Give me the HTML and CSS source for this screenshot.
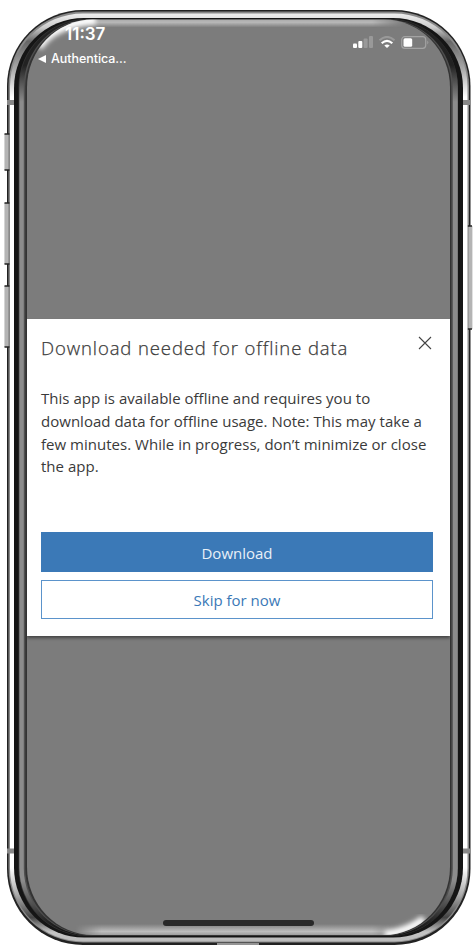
FILE: index.html
```html
<!DOCTYPE html>
<html lang="en">
<head>
<meta charset="utf-8">
<title>Download needed for offline data</title>
<link rel="stylesheet" href="styles.css">
</head>
<body>
<div class="phone">
  <svg class="frame" viewBox="0 0 475 949" aria-hidden="true">
    <defs>
      <linearGradient id="side" x1="0" x2="0" y1="0" y2="1">
        <stop offset="0" stop-color="#eee"/><stop offset=".015" stop-color="#ccc"/><stop offset=".03" stop-color="#666"/><stop offset=".06" stop-color="#aaa"/><stop offset=".09" stop-color="#fff"/>
        <stop offset=".92" stop-color="#fff"/><stop offset=".95" stop-color="#aaa"/><stop offset=".974" stop-color="#444"/><stop offset=".99" stop-color="#c4c4c4"/><stop offset="1" stop-color="#bbb"/>
      </linearGradient>
      <linearGradient id="inner" x1="0" x2="0" y1="0" y2="1">
        <stop offset="0" stop-color="#222"/><stop offset=".05" stop-color="#222"/><stop offset=".09" stop-color="#8c8c8c"/>
        <stop offset=".94" stop-color="#8c8c8c"/><stop offset=".985" stop-color="#222"/><stop offset="1" stop-color="#111"/>
      </linearGradient>
      <linearGradient id="topglow" x1="0" x2="0" y1="0" y2="1">
        <stop offset="0" stop-color="#aaa"/><stop offset=".35" stop-color="#b8b8b8"/><stop offset="1" stop-color="#7c7c7c"/>
      </linearGradient>
      <linearGradient id="botglow" x1="0" x2="0" y1="0" y2="1">
        <stop offset="0" stop-color="#7c7c7c"/><stop offset=".65" stop-color="#bdbdbd"/><stop offset="1" stop-color="#999"/>
      </linearGradient>
      <linearGradient id="fade" x1="0" x2="1" y1="0" y2="0">
        <stop offset="0" stop-color="#000"/><stop offset=".08" stop-color="#fff"/><stop offset=".9" stop-color="#fff"/><stop offset="1" stop-color="#000"/>
      </linearGradient>
      <mask id="ends"><rect x="75" y="0" width="330" height="949" fill="url(#fade)"/></mask>
      <filter id="soft" x="-30%" y="-30%" width="160%" height="160%"><feGaussianBlur stdDeviation="2.6"/></filter>
      <clipPath id="glass"><rect x="27" y="19.5" width="423" height="915.5" rx="66" ry="68"/></clipPath>
    </defs>
    <g fill="#b4b4b4">
      <rect x="4.500" y="134" width="5" height="36"/>
      <rect x="4.500" y="203" width="5" height="61"/>
      <rect x="4.500" y="286" width="5" height="61"/>
      <rect x="467" y="226" width="5" height="103"/>
    </g>
    <rect x="7" y="10" width="463.500" height="935" rx="76" fill="#222"/>
    <rect x="8.500" y="11.500" width="460.500" height="931" rx="74.500" fill="#888"/>
    <g>
      <path d="M6.800 134v36M6.800 203v61M6.800 286v61M470.500 226v103" stroke="#b4b4b4" stroke-width="3.800"/>
      <path d="M4.500 134h5M4.500 170h5M4.500 203h5M4.500 264h5M4.500 286h5M4.500 347h5M467.500 226h4.500M467.500 329h4.500" stroke="#222" stroke-width="1.700"/>
    </g>
    <rect x="10" y="13.500" width="457.500" height="928" rx="73" fill="url(#side)"/>
    <rect x="14" y="18" width="449" height="919.500" rx="70" fill="#151515"/>
    <rect x="18.500" y="19" width="439.500" height="917" rx="68" fill="#333"/>
    <rect x="19.300" y="19.500" width="438.500" height="916" rx="67.500" fill="url(#inner)"/>
    <rect x="23.800" y="19.500" width="429" height="916" rx="67" fill="#505050"/>
    <rect x="25.300" y="19.500" width="426" height="916" rx="67" fill="#333"/>
    <g fill="none" stroke="#888" stroke-width="5">
      <path d="M7 102.500h7M463 102.500h7M7 851h7M463 851h7"/>
    </g>
    <g clip-path="url(#glass)">
      <rect x="27" y="19" width="423" height="917" fill="#7c7c7c"/>
      <g mask="url(#ends)">
        <rect x="70" y="19.500" width="335" height="8" fill="url(#topglow)"/>
        <rect x="70" y="924" width="335" height="11.500" fill="url(#botglow)"/>
      </g>
      <path d="M38 47Q54 23 96 20" fill="none" stroke="#fff" stroke-width="9" filter="url(#soft)"/>
      <path d="M385 935Q409 931 424 919" fill="none" stroke="#fff" stroke-width="8" filter="url(#soft)"/>
    </g>
    <path d="M217 944h42" stroke="#bbb" stroke-width="1.500"/>
  </svg>
  <main class="screen">
    <header class="status">
      <div class="left">
        <div class="time">11:37</div>
        <div class="back"><svg width="8" height="8" viewBox="0 0 8 8"><path d="M8 0v8L0 4z" fill="#fff"/></svg><span>Authentica...</span></div>
      </div>
      <svg class="signals" width="76" height="14" viewBox="0 0 76 14">
        <g fill="#fff"><rect y="7.500" width="4" height="4.500" rx="1"/><rect x="5.300" y="5" width="4" height="7" rx="1"/></g>
        <g fill="#999"><rect x="10.600" y="2.500" width="4" height="9.500" rx="1"/><rect x="16" width="4" height="12" rx="1"/></g>
        <g fill="none" stroke-width="2"><path d="M26.500 4.300Q34-2.500 41.500 4.300" stroke="#999"/><path d="M28.700 7.300Q34 2.500 39.300 7.300" stroke="#fff" stroke-width="2.200"/></g>
        <path d="M31.300 9.500Q34 7.300 36.700 9.500L34 12z" fill="#fff"/>
        <rect x="48.700" y=".7" width="24" height="11.600" rx="3" fill="none" stroke="#a3a3a3" stroke-width="1.200"/>
        <rect x="50.500" y="2.300" width="8.700" height="8.400" rx="1.500" fill="#fff"/><path d="M74.300 4.500q2 2 0 4z" fill="#a3a3a3"/>
      </svg>
    </header>
    <section class="dialog">
      <div class="head">
        <h1>Download needed for offline data</h1>
        <svg class="close" width="14" height="14" viewBox="0 0 14 14"><path d="M1 1l12 12M13 1L1 13" stroke="#444" stroke-width="1.100"/></svg>
      </div>
      <p>This app is available offline and requires you to<br>download data for offline usage. Note: This may take a<br>few minutes. While in progress, don’t minimize or close<br>the app.</p>
      <button class="primary">Download</button>
      <button class="secondary">Skip for now</button>
    </section>
    <div class="home"></div>
  </main>
</div>
</body>
</html>
```
FILE: styles.css
```css
* { box-sizing: border-box; }
body { margin: 0; background: #fff; font-family: "Open Sans", "Noto Sans", sans-serif; }
.phone { position: relative; width: 475px; height: 949px; padding: 20px 25px 0 27px; overflow: hidden; }
.frame { position: absolute; inset: 0; width: 475px; height: 949px; }
.screen { position: relative; height: 915px; display: flex; flex-direction: column; }
.status { height: 298.5px; flex: none; display: flex; justify-content: space-between; padding: 4px 21px 0 11px; color: #fff; font-family: Inter, sans-serif; }
.time { font-size: 17px; font-weight: 600; line-height: 20px; padding-left: 27px; letter-spacing: 0; }
.back { display: flex; align-items: center; gap: 5px; font-size: 12.5px; line-height: 16px; margin-top: 6px; letter-spacing: -.05px; font-weight: 500; padding-top: 1px; }
.signals { margin-top: 12px; }
.dialog { height: 317.5px; flex: none; background: #fff; padding: 15px 17px 17px 14px; display: flex; flex-direction: column; box-shadow: 0 2px 3px #444; clip-path: inset(0 0 -8px 0); color: #3a3a3a; }
.head { display: flex; justify-content: space-between; }
h1 { margin: 0; font-size: 18.5px; font-weight: 300; line-height: 28px; letter-spacing: .9px; white-space: nowrap; -webkit-text-stroke: .25px #3a3a3a; }
.close { margin: 2px 1px 0 0; }
p { margin: 25.5px 0 0; font-size: 15px; line-height: 22.8px; white-space: nowrap; letter-spacing: .02px; }
button { height: 39.5px; flex: none; width: 392px; border: 1px solid #3b79b7; font: 15px "Open Sans", sans-serif; padding: 2px 0 0; }
.primary { margin-top: auto; background: #3b79b7; color: #e8f0f8; }
.secondary { margin-top: 8px; background: #fff; color: #3b79b7; border-color: #5b93cb; }
.home { width: 151px; height: 6px; border-radius: 3px; background: #292929; margin: auto auto 9px 136px; }
```
